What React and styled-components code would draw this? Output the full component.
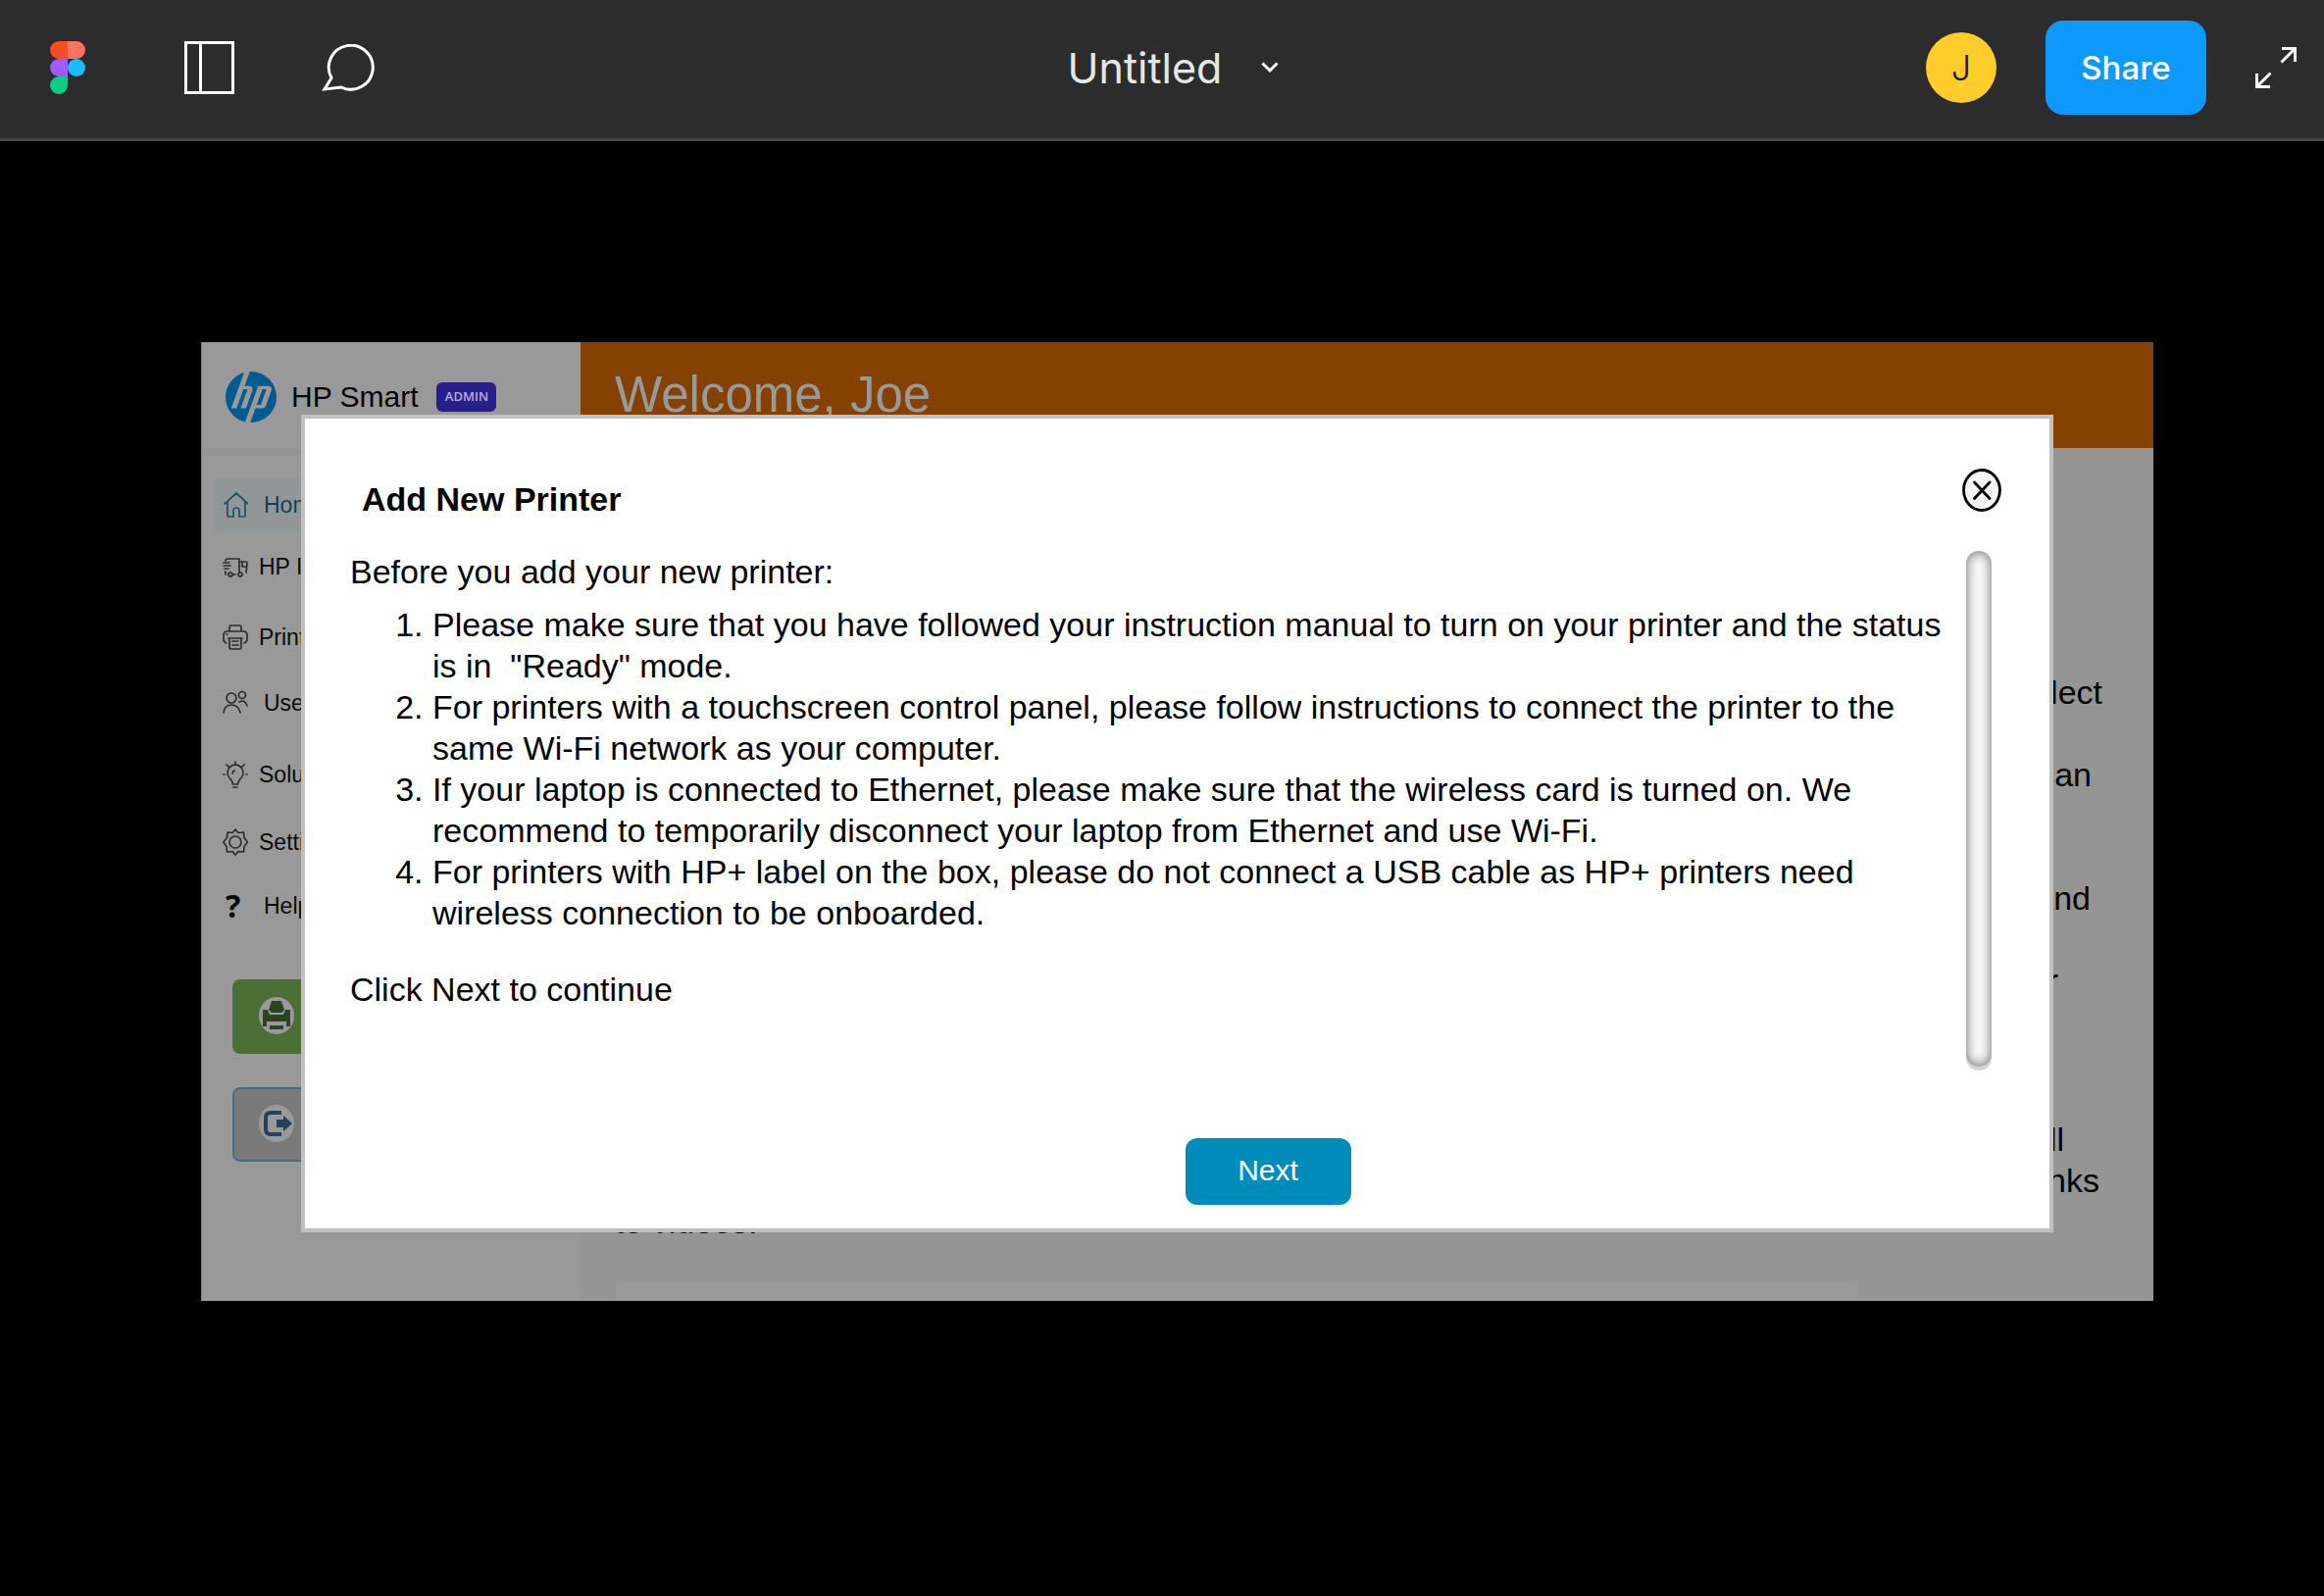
import React from "react";
import styled, { createGlobalStyle } from "styled-components";
import { SiHp } from "react-icons/si";

const GlobalStyle = createGlobalStyle`
  *, *::before, *::after { box-sizing: border-box; }
  body { margin: 0; background: #000; }
  button { font: inherit; color: inherit; border: 0; padding: 0; background: none; cursor: pointer; }
  svg { display: block; flex: none; }
`;

const Page = styled.div`
  min-height: 100vh;
  font-family: "Liberation Sans", Arial, sans-serif;
  color: #000;
`;

/* ---------- Viewer toolbar ---------- */

const Toolbar = styled.header`
  display: grid;
  grid-template-columns: 1fr auto 1fr;
  align-items: center;
  height: 144px;
  padding: 0 28px 3px 51px;
  background: #2c2c2c;
  border-bottom: 3px solid #444;
  color: #fff;
  font-family: Inter, sans-serif;
`;

const ToolGroup = styled.div`
  display: flex;
  align-items: center;
`;

const LeftTools = styled(ToolGroup)`
  button + button { margin-left: 101px; }
  button:last-child { margin-left: 89px; }
`;

const RightTools = styled(ToolGroup)`
  justify-content: flex-end;
  gap: 50px;
`;

const FileMenu = styled.button`
  display: flex;
  align-items: center;
  gap: 40px;
  && { font-size: 43px; }
  line-height: 48px;
  color: #e6e6e6;
`;

const Avatar = styled.button`
  width: 72px;
  height: 72px;
  border-radius: 50%;
  && { font-size: 36px; font-weight: 300; color: #1c1600; background: #ffcd29; }
`;

const ShareButton = styled.button`
  width: 164px;
  height: 96px;
  border-radius: 18px;
  && { font-size: 33px; font-weight: 500; background: #0d99ff; }
`;

/* ---------- Prototype frame ---------- */

const Stage = styled.main`
  padding: 205px 174px 0 205px;
`;

const Frame = styled.div`
  position: relative;
  display: flex;
  background: #959595;
  overflow: hidden;
`;

const Sidebar = styled.aside`
  flex: none;
  width: 387px;
  background: #999;
  border-left: 1px solid #858585;
`;

const Brand = styled.div`
  display: flex;
  align-items: center;
  height: 116px;
  padding: 4px 0 0 24px;
  border-bottom: 8px solid #939393;
  color: #005c90;
`;

const BrandName = styled.span`
  margin-left: 15px;
  font-size: 30px;
  color: #000;
`;

const Badge = styled.span`
  margin-left: 19px;
  width: 61px;
  height: 30px;
  border-radius: 6px;
  background: #27208a;
  color: #b3aedb;
  font: 600 13px/29px "Open Sans", sans-serif;
  text-align: center;
`;

const Nav = styled.nav`
  padding: 23px 0 0 12px;
`;

const NavLink = styled.a`
  display: flex;
  align-items: center;
  gap: ${(p) => (p.$wide ? 16 : 11)}px;
  height: 54px;
  margin-top: ${(p) => p.$space || 0}px;
  padding-left: 9px;
  font-size: 23px;
  white-space: nowrap;
  text-decoration: none;
  color: ${(p) => (p.$active ? "#123f50" : "#0b0b0b")};
  background: ${(p) => (p.$active ? "#919799" : "transparent")};
`;

const Mark = styled.span`
  width: 26px;
  padding-left: 3px;
  font: 700 32px/34px "Noto Sans", sans-serif;
`;

const SideActions = styled.div`
  display: flex;
  flex-direction: column;
  gap: 34px;
  padding: 48px 31px 0 31px;
`;

const SideButton = styled.button`
  display: flex;
  align-items: center;
  height: 76px;
  && {
    padding: 0 0 2px 25px;
    border: 2px solid ${(p) => p.$line};
    background: ${(p) => p.$fill};
  }
  border-radius: 8px;
`;

const Content = styled.section`
  flex: 1;
  min-width: 0;
`;

const Banner = styled.div`
  height: 108px;
  padding: 24px 0 0 35px;
  background: #844100;
  color: #999;
  font-size: 51px;
  line-height: 60px;
`;

const Copy = styled.div`
  display: flex;
  flex-direction: column;
  gap: 120px;
  padding: 228px 0 0 35px;
  font-size: 34px;
  line-height: 42px;
`;

const CopyLine = styled.div`
  height: 42px;
  padding-right: ${(p) => p.$end || 0}px;
  text-align: ${(p) => (p.$end ? "right" : "left")};
`;

const Panel = styled.div`
  width: 79%;
  height: 18px;
  margin: 42px 0 0 36px;
  background: #999;
`;

/* ---------- Dialog ---------- */

const Overlay = styled.div`
  position: absolute;
  inset: 0;
  padding: 74px 102px 0;
`;

const Dialog = styled.div`
  border: 4px solid #c0c0c0;
  background: #fff;
  padding-bottom: 24px;
`;

const DialogHeader = styled.div`
  display: flex;
  justify-content: space-between;
  align-items: flex-start;
  padding: 51px 49px 0 58px;
`;

const DialogTitle = styled.h1`
  margin: 0;
  padding-top: 10px;
  font-size: 34px;
  line-height: 42px;
`;

const DialogBody = styled.div`
  display: flex;
  gap: 20px;
  min-height: 530px;
  margin-top: 32px;
  padding: 0 59px 0 46px;
  font-size: 34px;
  line-height: 42px;
`;

const Instructions = styled.div`
  flex: 1;
  p { margin: 0; }
  ol { margin: 12px 0 36px; padding-left: 84px; }
`;

const ScrollTrack = styled.div`
  width: 26px;
  margin-bottom: 4px;
  border-radius: 13px;
  background: #fafafa;
  box-shadow: inset 0 0 12px 1px #777, 0 4px 0 #d4d4d4;
`;

const DialogFooter = styled.div`
  display: flex;
  justify-content: center;
  margin-top: 69px;
  padding-left: 185px;
`;

const NextButton = styled.button`
  width: 169px;
  height: 68px;
  border-radius: 12px;
  && { padding-bottom: 3px; background: #008cba; color: #fff; font-size: 30px; }
`;

/* ---------- Icons ---------- */

const FigmaIcon = () => (
  <svg width="36" height="54" viewBox="0 0 36 54" aria-hidden="true">
    <path d="M18 0H9a9 9 0 0 0 0 18h9z" fill="#f24e1e" />
    <path d="M18 0h9a9 9 0 0 1 0 18h-9z" fill="#ff7262" />
    <path d="M18 18H9a9 9 0 0 0 0 18h9z" fill="#a259ff" />
    <circle cx="27" cy="27" r="9" fill="#1abcfe" />
    <path d="M18 36H9a9 9 0 1 0 9 9z" fill="#0acf83" />
  </svg>
);

const LayoutIcon = () => (
  <svg width="51" height="54" viewBox="0 0 51 54" fill="none" stroke="#fff" strokeWidth="3" aria-hidden="true">
    <path d="M1.5 1.5h48v51h-48zM16.500 1.500v51" />
  </svg>
);

const CommentIcon = () => (
  <svg width="54" height="48" viewBox="0 0 54 48" fill="none" stroke="#fff" strokeWidth="3" aria-hidden="true">
    <path d="M10 34.500a22.500 22.500 0 1 1 10 9.500L3 46z" />
  </svg>
);

const ChevronIcon = () => (
  <svg width="18" height="12" viewBox="0 0 18 12" fill="none" stroke="#fff" strokeWidth="3" aria-hidden="true">
    <path d="M1.500 1.500L9 9l7.500-7.500" />
  </svg>
);

const ExpandIcon = () => (
  <svg width="42" height="42" viewBox="0 0 42 42" fill="none" stroke="#fff" strokeWidth="3" aria-hidden="true">
    <path d="M27 1.500h13.500V15M40 2L26.500 15.500M1.500 27v13.500H15M2 40l13.500-13.500" />
  </svg>
);

const Line = ({ children, color = "#2e2e2e" }) => (
  <svg width="26" height="28" viewBox="0 0 26 28" fill="none" stroke={color} strokeWidth="1.7" strokeLinecap="round" strokeLinejoin="round" aria-hidden="true">
    {children}
  </svg>
);

const HomeIcon = () => (
  <Line color="#1d5064">
    <path d="M2 13L14 2l12 11M5 11v14q0 1 1 1h5v-6q0-3 3-3t3 3v6h5q1 0 1-1V11" />
  </Line>
);

const TruckIcon = () => (
  <Line>
    <path d="M3 8q0-2 2-2h12v13M1 10h6M1 13h7M2 16h4M3 19v3M17 9h7q1 0 1 2l-1 9M20 10v4h4M11 22h2" />
    <circle cx="8" cy="22" r="2" />
    <circle cx="18" cy="22" r="2" />
  </Line>
);

const PrinterIcon = () => (
  <Line>
    <path d="M7 8V4q0-2 2-2h8q2 0 2 2v4M4 20q-3-1-3-4v-4q0-4 4-4h16q4 0 4 4v4q0 3-3 4M7 15h12v9q0 2-2 2H9q-2 0-2-2zM6 15h14M10 18h6M10 22h6M4 11h1" />
  </Line>
);

const UsersIcon = () => (
  <Line>
    <circle cx="9" cy="9" r="5" />
    <circle cx="20" cy="6" r="3.500" />
    <path d="M1 24q1-8 8-8t9 8M17 13q6-3 8 4" />
  </Line>
);

const BulbIcon = () => (
  <Line>
    <path d="M10.500 24q0-3-3.500-6.500a8 8 0 1 1 12 0q-3.500 3.500-3.500 6.500zM11 27h4M10 13q0-2 2-3M13 1v2M4 4l2 2M22 4l-2 2M1 14h1M24 14h1" />
  </Line>
);

const GearIcon = () => (
  <Line>
    <path d="M13 1l3 3.500 5.500-.5.500 5.500 3.500 4.500-3.500 4.500-.5 5.500-5.500-.5-3 3.500-3-3.500-5.500.5-.5-5.500L.800 14l3.700-4.500.5-5.500 5 .5z" />
    <circle cx="13" cy="14" r="6" />
  </Line>
);

const PrintRound = () => (
  <svg width="36" height="38" viewBox="0 0 36 38" aria-hidden="true">
    <ellipse cx="18" cy="19" rx="18" ry="19" fill="#999" />
    <path d="M13 4h10l3 9-3 3H13l-3-3zM4 13h5l2 5h14l2-5h5v17h-4v-5H8v5H4zM11 29h14v4H11z" fill="#2c4422" />
  </svg>
);

const ExitRound = () => (
  <svg width="36" height="38" viewBox="0 0 36 38" aria-hidden="true">
    <ellipse cx="18" cy="19" rx="18" ry="19" fill="#999" />
    <path d="M23 8h-11q-5 0-5 5v12q0 5 5 5h11" fill="none" stroke="#27405c" strokeWidth="4" />
    <path d="M18 15h7v-4l9 8-9 8v-4h-7z" fill="#27405c" />
  </svg>
);

const CloseIcon = () => (
  <svg width="40" height="44" viewBox="0 0 40 44" fill="none" stroke="#000" strokeWidth="2.800" strokeLinecap="round" aria-hidden="true">
    <ellipse cx="20" cy="22" rx="18.500" ry="20.500" fill="#f5f5f5" />
    <path d="M12.500 14l15.500 16.500M28 14L12.500 30.500" />
  </svg>
);

const navItems = [
  { label: "Home", icon: <HomeIcon />, wide: true, active: true },
  { label: "HP Ink", icon: <TruckIcon />, space: 9 },
  { label: "Printers", icon: <PrinterIcon />, space: 18 },
  { label: "Users", icon: <UsersIcon />, space: 13, wide: true },
  { label: "Solutions", icon: <BulbIcon />, space: 19 },
  { label: "Settings", icon: <GearIcon />, space: 15 },
  { label: "Help", icon: <Mark>?</Mark>, space: 11, wide: true },
];

const copyBlocks = [
  [["select", 52], [], ["can", 63], [], [], ["and", 64], [], ["or", 97]],
  [["all", 91], ["links", 55], ["to videos."]],
];

const steps = [
  'Please make sure that you have followed your instruction manual to turn on your printer and the status is in \u00a0"Ready" mode.',
  "For printers with a touchscreen control panel, please follow instructions to connect the printer to the same Wi-Fi network as your computer.",
  "If your laptop is connected to Ethernet, please make sure that the wireless card is turned on. We recommend to temporarily disconnect your laptop from Ethernet and use Wi-Fi.",
  "For printers with HP+ label on the box, please do not connect a USB cable as HP+ printers need wireless connection to be onboarded.",
];

export default function App() {
  return (
    <Page>
      <GlobalStyle />
      <Toolbar>
        <LeftTools>
          <button aria-label="Figma"><FigmaIcon /></button>
          <button aria-label="Toggle sidebar"><LayoutIcon /></button>
          <button aria-label="Comments"><CommentIcon /></button>
        </LeftTools>
        <FileMenu>
          Untitled
          <ChevronIcon />
        </FileMenu>
        <RightTools>
          <Avatar>J</Avatar>
          <ShareButton>Share</ShareButton>
          <button aria-label="Full screen"><ExpandIcon /></button>
        </RightTools>
      </Toolbar>

      <Stage>
        <Frame>
          <Sidebar>
            <Brand>
              <SiHp size={52} aria-hidden="true" />
              <BrandName>HP Smart</BrandName>
              <Badge>ADMIN</Badge>
            </Brand>
            <Nav>
              {navItems.map((item) => (
                <NavLink key={item.label} href="#" $wide={item.wide} $active={item.active} $space={item.space}>
                  {item.icon}
                  {item.label}
                </NavLink>
              ))}
            </Nav>
            <SideActions>
              <SideButton $fill="#4c6e37" $line="#4c6e37" aria-label="Add printer"><PrintRound /></SideButton>
              <SideButton $fill="#7a7a7a" $line="#4a6b80" aria-label="Sign out"><ExitRound /></SideButton>
            </SideActions>
          </Sidebar>

          <Content>
            <Banner>Welcome, Joe</Banner>
            <Copy>
              {copyBlocks.map((lines, b) => (
                <div key={b}>
                  {lines.map(([text, end], i) => (
                    <CopyLine key={i} $end={end}>{text}</CopyLine>
                  ))}
                </div>
              ))}
            </Copy>
            <Panel />
          </Content>

          <Overlay>
            <Dialog role="dialog" aria-labelledby="dialog-title">
              <DialogHeader>
                <DialogTitle id="dialog-title">Add New Printer</DialogTitle>
                <button aria-label="Close"><CloseIcon /></button>
              </DialogHeader>
              <DialogBody>
                <Instructions>
                  <p>Before you add your new printer:</p>
                  <ol>
                    {steps.map((step) => (
                      <li key={step}>{step}</li>
                    ))}
                  </ol>
                  <p>Click Next to continue</p>
                </Instructions>
                <ScrollTrack />
              </DialogBody>
              <DialogFooter>
                <NextButton>Next</NextButton>
              </DialogFooter>
            </Dialog>
          </Overlay>
        </Frame>
      </Stage>
    </Page>
  );
}
